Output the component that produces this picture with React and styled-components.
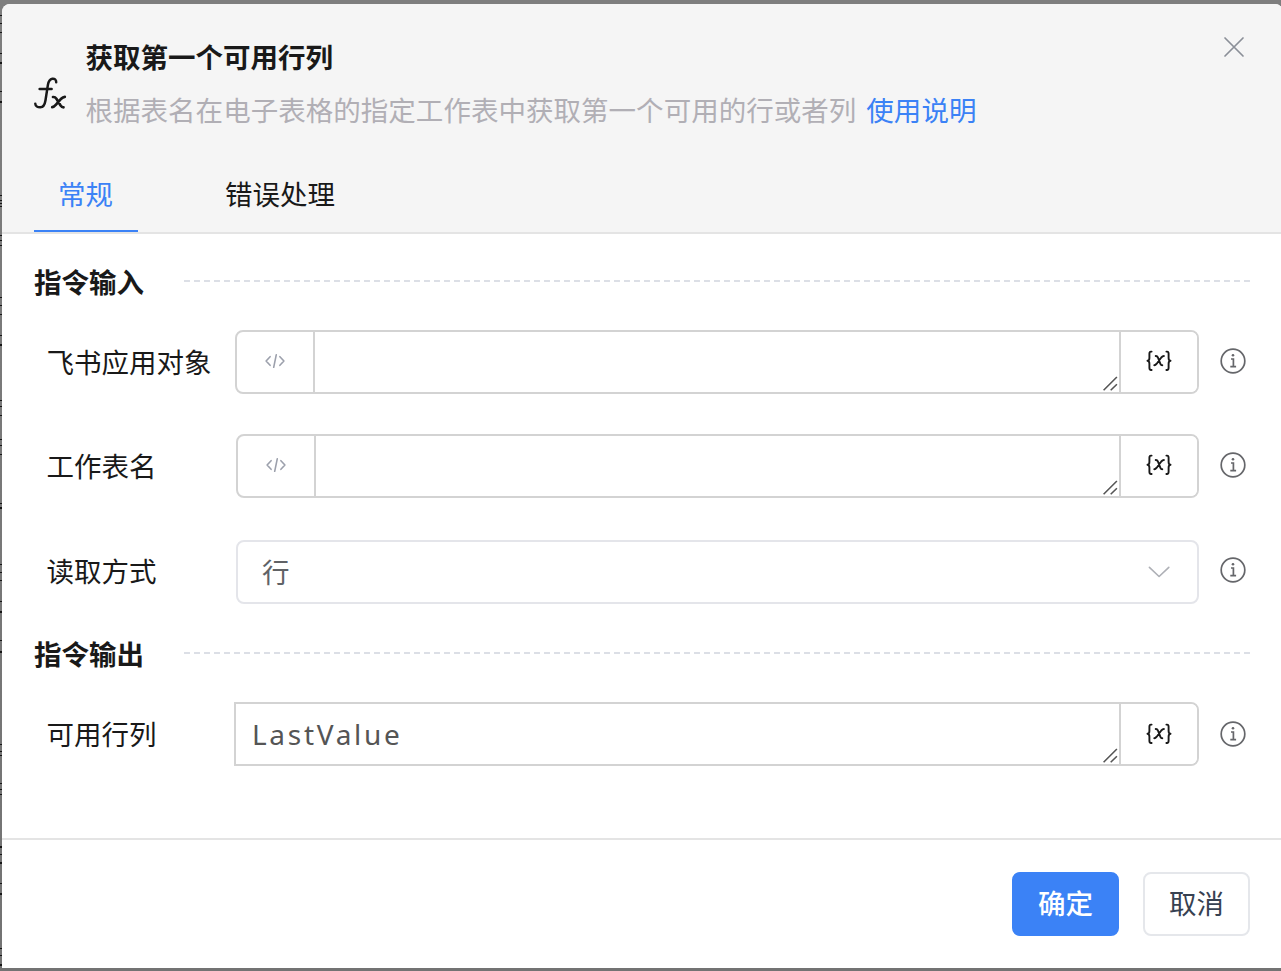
import React from "react";
import styled, { createGlobalStyle } from "styled-components";

const GlobalStyle = createGlobalStyle`
  * { box-sizing: border-box; }
  html, body { margin: 0; height: 100%; overflow: hidden; }
  body {
    background: #7c7c7c;
    color: #191919;
    font-family: "Noto Sans CJK SC", "Noto Sans", sans-serif;
    font-size: 27.5px;
    line-height: 40px;
  }
  button, textarea { font: inherit; margin: 0; }
  svg { display: block; flex: none; }
`;

const Screen = styled.div`
  display: flex;
  width: 1281px;
  height: 971px;
  padding-top: 4px;
  overflow: hidden;
  background: linear-gradient(#7e7e7e, #737373);
`;

const Backdrop = styled.svg`
  width: 2px;
  height: 967px;
`;

const Dialog = styled.section`
  display: flex;
  flex-direction: column;
  flex: none;
  width: 1281px;
  height: 964px;
  background: #fff;
  border-radius: 8px 8px 0 0;
  overflow: hidden;
`;

const Header = styled.header`
  height: 230px;
  flex: none;
  display: flex;
  flex-direction: column;
  justify-content: space-between;
  background: #f5f5f5;
  border-bottom: 2px solid #e4e4e4;
`;

const Heading = styled.div`
  display: flex;
  align-items: flex-start;
  padding: 28px 38px 0 30px;
`;

const FunctionIcon = styled.svg`
  width: 36px;
  height: 36px;
  margin: 44px 17.5px 0 0;
`;

const Titles = styled.div`
  flex: 1;
  padding-top: 4px;
  white-space: nowrap;
`;

const Title = styled.h1`
  margin: 0 0 13px;
  font-size: 27.5px;
  line-height: 40px;
  font-weight: 700;
`;

const Description = styled.div`
  display: flex;
  gap: 10px;
  color: #b1afb5;
  letter-spacing: 0.03px;
`;

const HelpLink = styled.a`
  color: #3b82f6;
`;

const CloseButton = styled.button`
  border: 0;
  padding: 0;
  background: none;
`;

const Tabs = styled.nav`
  display: flex;
  gap: 63px;
  padding-left: 32px;
`;

const Tab = styled.button`
  height: 58px;
  padding: 0 25px 19px 24px;
  border: 0;
  border-bottom: 2px solid ${(p) => (p.$active ? "#3b82f6" : "transparent")};
  background: none;
  color: ${(p) => (p.$active ? "#3b82f6" : "#191919")};
  line-height: 38px;
`;

const Content = styled.main`
  flex: 1;
  padding: 26px 31px 0 32px;
`;

const SectionTitle = styled.div`
  display: flex;
  align-items: center;
  gap: 40px;
  height: 42px;
  margin: ${(p) => p.$margin};
  font-weight: 700;
`;

const Dashes = styled.div`
  flex: 1;
  height: 2px;
  margin: 0 2px 0 0;
  background: repeating-linear-gradient(90deg, #dcdfe6 0 6px, transparent 6px 10px);
`;

const Row = styled.div`
  display: flex;
  height: 64px;
  margin-bottom: ${(p) => p.$after || 0}px;
  padding-left: 12px;
`;

const Label = styled.label`
  width: ${(p) => p.$width}px;
  padding-top: ${(p) => p.$top || 11}px;
  padding-left: 0.5px;
  white-space: nowrap;
`;

const InputGroup = styled.div`
  display: flex;
  flex: 1;
  border: 2px solid #d3d3d3;
  border-radius: ${(p) => (p.$squareStart ? "0 8px 8px 0" : "8px")};
  overflow: hidden;
`;

const Prefix = styled.div`
  display: flex;
  justify-content: center;
  width: 78px;
  padding-top: 19px;
  border-right: 2px solid #d3d3d3;
`;

const InputArea = styled.div`
  display: flex;
  flex: 1;
  align-items: flex-end;
  justify-content: space-between;
  padding: 0 0 0 16px;
`;

const InputText = styled.span`
  align-self: center;
  color: #555;
  font-family: "Noto Sans", sans-serif;
  font-size: 28px;
  letter-spacing: 2.7px;
`;

const VariableButton = styled.button`
  display: flex;
  justify-content: center;
  width: 78px;
  padding: ${(p) => p.$top}px 0 0;
  border: 0;
  border-left: 2px solid #d3d3d3;
  background: #fff;
`;

const SelectBox = styled.div`
  display: flex;
  flex: 1;
  align-items: center;
  justify-content: space-between;
  padding: 0 26px 0 24px;
  border: 2px solid #e4e5ea;
  border-radius: 8px;
  color: #606266;
`;

const SelectValue = styled.span`
  padding-bottom: 2px;
`;

const InfoButton = styled.button`
  width: 53px;
  padding: ${(p) => p.$top}px 0 0 20px;
  border: 0;
  background: none;
  display: flex;
  align-items: flex-start;
`;

const Footer = styled.footer`
  display: flex;
  flex: none;
  justify-content: flex-end;
  gap: 24px;
  height: 130px;
  padding: 32px 33px 0 0;
  border-top: 2px solid #e4e4e4;
`;

const Button = styled.button`
  width: 107px;
  height: 64px;
  padding: 0 0 4px;
  border: 2px solid ${(p) => (p.$primary ? "#3b82f6" : "#e5e7eb")};
  border-radius: 8px;
  background: ${(p) => (p.$primary ? "#3b82f6" : "#fff")};
  color: ${(p) => (p.$primary ? "#fff" : "#374151")};
  font-weight: ${(p) => (p.$primary ? 500 : 400)};
`;

const FxIcon = () => (
  <FunctionIcon viewBox="0 0 36 36" fill="none" stroke="#191919" strokeWidth="2.5" strokeLinecap="round" strokeLinejoin="round">
    <path d="M24.2 6.2c.1-2.6-1.6-3.8-3.9-3.5-2.6.4-3.8 2.6-4.4 6.2l-2.4 15.3c-.7 4.5-2.3 7-5.2 7.1-2.5.1-4.9-1.2-5-3.6" />
    <path d="M7.6 12.9h12" />
    <path d="M21 21h.5c1.4 0 2.1.6 2.9 1.8l4.2 6.7c.8 1.2 1.5 1.8 2.9 1.8M32.8 20.9c-1.4.1-2.5.7-3.6 1.8l-5.2 6c-1.2 1.4-2.2 2.4-3.8 2.5" strokeWidth="2.7" />
  </FunctionIcon>
);

const CloseIcon = () => (
  <svg width="22" height="30" viewBox="0 0 22 30" stroke="#8b8f98" strokeWidth="1.7" strokeLinecap="round">
    <path d="M2 6l18 18M20 6L2 24" />
  </svg>
);

const CodeIcon = () => (
  <svg width="20" height="20" viewBox="0 0 20 20" fill="none" stroke="#9ca0ac" strokeWidth="1.6" strokeLinecap="round" strokeLinejoin="round">
    <path d="M5.1 5.7L1.1 10l4 4.3M14.9 5.7l4 4.3-4 4.3M11.3 3.7L8.7 16.3" />
  </svg>
);

const VariableIcon = () => (
  <svg width="28" height="30" viewBox="0 0 28 30" fill="none" stroke="#191919" strokeWidth="1.9" strokeLinecap="round" strokeLinejoin="round">
    <path d="M6.6 5.6H6C4.7 5.6 4.4 6.5 4.4 7.8v4.1c0 1.6-.6 2.7-1.9 2.9 1.3.2 1.9 1.3 1.9 2.9v4.1c0 1.3.3 2.2 1.6 2.2h.6" />
    <path d="M21.4 5.6h.6c1.3 0 1.6.9 1.6 2.2v4.1c0 1.6.6 2.7 1.9 2.9-1.3.2-1.9 1.3-1.9 2.9v4.1c0 1.3-.3 2.2-1.6 2.2h-.6" />
    <path d="M10.7 10h.3c1 0 1.5.6 1.9 1.5l2.5 6.3c.4 1 .9 1.5 1.9 1.5M18.9 10c-1.1 0-1.8.6-2.6 1.5l-4.6 6.2c-.8 1-1.4 1.5-2.4 1.5" />
  </svg>
);

const InfoIcon = () => (
  <svg width="28" height="28" viewBox="0 0 28 28" fill="none" stroke="#65666a" strokeWidth="1.7">
    <circle cx="14" cy="14" r="11.8" />
    <circle cx="14" cy="8.2" r="1.3" fill="#65666a" stroke="none" />
    <path d="M12 12h2.4v7.4M11.3 19.6h5.8" />
  </svg>
);

const ChevronIcon = () => (
  <svg width="24" height="14" viewBox="0 0 24 14" fill="none" stroke="#aeb0b6" strokeWidth="1.6" strokeLinecap="round" strokeLinejoin="round">
    <path d="M2.4 2.3l9.7 9.2 9.7-9.2" />
  </svg>
);

const ResizeGrip = () => (
  <svg width="17" height="17" viewBox="0 0 17 17" stroke="#555" strokeWidth="1.6">
    <path d="M1.6 15.2L14.9 2M8.7 15.2l6.2-6" />
  </svg>
);

const backdropMarks = [
  [11, 1], [19, 1], [28, 1], [49, 1], [58, 2], [87, 1], [97, 2],
  [191, 1], [196, 1], [199, 1], [202, 1], [231, 1], [236, 1], [241, 1],
  [293, 1], [301, 1], [310, 1], [331, 1], [340, 2],
  [396, 1], [402, 1], [411, 1], [435, 1], [441, 1], [450, 1],
  [499, 1], [503, 2], [560, 1], [568, 1], [576, 1], [597, 1], [607, 2], [636, 1], [647, 2],
  [740, 1], [747, 1], [751, 1], [779, 1], [785, 1], [790, 1],
  [842, 2], [850, 1], [858, 2], [879, 1], [889, 2], [944, 1], [951, 1], [960, 2],
];

const TextField = ({ id, label, labelWidth, value, after, infoTop = 17 }) => (
  <Row $after={after}>
    <Label $width={labelWidth} id={id}>{label}</Label>
    <InputGroup $squareStart={value !== undefined}>
      {value === undefined && <Prefix><CodeIcon /></Prefix>}
      <InputArea role="textbox" aria-labelledby={id}>
        <InputText>{value}</InputText>
        <ResizeGrip />
      </InputArea>
      <VariableButton $top={infoTop - 3} aria-label="variable"><VariableIcon /></VariableButton>
    </InputGroup>
    <InfoButton $top={infoTop} aria-label="info"><InfoIcon /></InfoButton>
  </Row>
);

export default function App() {
  return (
    <Screen>
      <GlobalStyle />
      <Backdrop viewBox="0 0 2 967">
        {backdropMarks.map(([y, h]) => (
          <rect key={y} x="0" y={y} width="2" height={h} fill="#151515" />
        ))}
      </Backdrop>
      <Dialog role="dialog">
        <Header>
          <Heading>
            <FxIcon />
            <Titles>
              <Title>获取第一个可用行列</Title>
              <Description>
                <span>根据表名在电子表格的指定工作表中获取第一个可用的行或者列</span>
                <HelpLink>使用说明</HelpLink>
              </Description>
            </Titles>
            <CloseButton aria-label="close"><CloseIcon /></CloseButton>
          </Heading>
          <Tabs>
            <Tab $active>常规</Tab>
            <Tab>错误处理</Tab>
          </Tabs>
        </Header>
        <Content>
          <SectionTitle $margin="0 0 28px">指令输入<Dashes /></SectionTitle>
          <TextField id="app" label="飞书应用对象" labelWidth={189} after={40} />
          <TextField id="sheet" label="工作表名" labelWidth={190} after={42} />
          <Row>
            <Label $width={190} $top={10}>读取方式</Label>
            <SelectBox><SelectValue>行</SelectValue><ChevronIcon /></SelectBox>
            <InfoButton $top={16} aria-label="info"><InfoIcon /></InfoButton>
          </Row>
          <SectionTitle $margin="28px 0">指令输出<Dashes /></SectionTitle>
          <TextField id="output" label="可用行列" labelWidth={188} value="LastValue" infoTop={18} />
        </Content>
        <Footer>
          <Button $primary>确定</Button>
          <Button>取消</Button>
        </Footer>
      </Dialog>
    </Screen>
  );
}
